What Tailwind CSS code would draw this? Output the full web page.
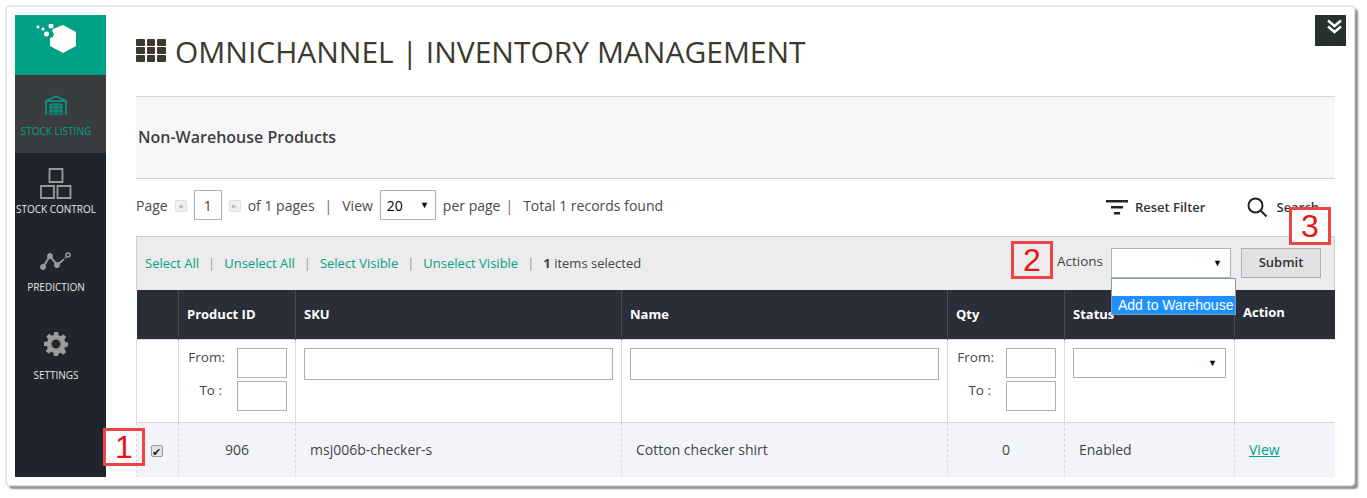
<!DOCTYPE html>
<html lang="en">
  <head>
    <meta charset="UTF-8" />
    <title>Inventory Management</title>
    <script src="https://cdn.jsdelivr.net/npm/@tailwindcss/browser@4"></script>
  </head>
  <body class="bg-white font-['Open_Sans',sans-serif] text-[#3d3d3d] w-[1367px] h-[498px] overflow-hidden">
    <!-- Window frame -->
    <div class="relative ml-[6px] mt-[6px] w-[1349px] h-[480px] bg-white rounded-[4px] border border-[#e0e0e0] shadow-[0_0_3px_#cfcfcf,3px_3px_2px_#8a8a8a] p-2 flex">
      <!-- Sidebar -->
      <div class="w-[91px] h-[462px] shrink-0 bg-[#20242c] flex flex-col text-[10px] text-[#e6e6e6] pr-[9px] relative">
        <div class="absolute left-0 top-0 w-[91px] h-[60px] bg-[#00a187]"></div>
        <div class="absolute left-0 top-[60px] w-[91px] h-[78px] bg-[#3a3d40]"></div>
        <div class="relative h-[60px] flex justify-center pt-[9px]">
          <svg width="40" height="29" viewBox="0 0 40 29" fill="#fff">
            <path d="M27 1l13 7v14l-13 7-13-7v-8l3-1 1-3-2-3 1-2z" />
            <circle cx="2" cy="3" r="1.500" />
            <circle cx="7" cy="5" r="1.500" />
            <circle cx="15" cy="2" r="2.500" />
            <circle cx="10.500" cy="10" r="2.500" />
          </svg>
        </div>
        <div class="relative h-[78px] flex flex-col items-center pt-[20px] text-[#00a187]">
          <svg width="22" height="20" viewBox="0 0 22 20" fill="none" stroke="#00a187" stroke-width="1.500">
            <path d="M1 20V6l10-5 10 5v14" />
            <path d="M1 6h20" />
            <path d="M5 9h12v11H5z" fill="#00a187" fill-opacity=".4" stroke-width="1" />
            <path d="M5 12h12M5 16h12M11 12v8" stroke-width="1" />
          </svg>
          <span class="mt-[9px] leading-[14px] whitespace-nowrap">STOCK LISTING</span>
        </div>
        <div class="relative flex flex-col items-center pt-[15px] h-[80px]">
          <svg width="32" height="31" viewBox="0 0 32 31" fill="none" stroke="#9a9a9a" stroke-width="1.800">
            <path d="M9.500 1h13v13h-13zM1 18h13v12H1zM17.500 18h13v12h-13z" />
          </svg>
          <span class="mt-[3px] leading-[14px] whitespace-nowrap">STOCK CONTROL</span>
        </div>
        <div class="relative flex flex-col items-center pt-[18px] h-[88px]">
          <svg width="32" height="20" viewBox="0 0 32 20" fill="none" stroke="#9a9a9a">
            <path d="M3 16L10 5l7 9 6-5" stroke-width="2" />
            <path d="M23 9l3-3" stroke-width="1.500" stroke-dasharray="1.500 1" />
            <circle cx="3" cy="16" r="2.500" fill="#9a9a9a" />
            <circle cx="10" cy="5" r="2.500" fill="#9a9a9a" />
            <circle cx="17" cy="14" r="2.500" fill="#9a9a9a" />
            <circle cx="28" cy="4" r="2" stroke-width="1.500" />
          </svg>
          <span class="mt-[9px] leading-[14px]">PREDICTION</span>
        </div>
        <div class="relative flex flex-col items-center pt-[11px]">
          <svg width="24" height="24" viewBox="0 0 24 24" fill="#9a9a9a">
            <path fill-rule="evenodd" d="M10 0h4l.6 3.300 2 .9L19.400 2.300l2.800 2.800-1.900 2.800.9 2 3.300.6v4l-3.300.6-.9 2 1.900 2.800-2.800 2.800-2.800-1.900-2 .9L14 24h-4l-.6-3.300-2-.9-2.800 1.900-2.800-2.800 1.900-2.800-.9-2L0 14v-4l3.300-.6.9-2L2.300 4.600l2.800-2.800 2.800 1.900 2-.9zM12 7.500a4.500 4.500 0 100 9 4.500 4.500 0 000-9z" />
          </svg>
          <span class="mt-[12px] leading-[14px]">SETTINGS</span>
        </div>
      </div>

      <!-- Main -->
      <div class="w-[1199px] ml-[30px] h-[462px] overflow-hidden shrink-0">
        <h1 class="h-[81px] flex items-center gap-[9px] text-[#3c3a30] text-[30px] leading-none whitespace-nowrap pb-[8px]">
          <span class="grid grid-cols-3 gap-x-[2px] gap-y-[1px] w-[30px] -mt-[2px]">
            <i class="h-[7px] bg-[#3c3a30] rounded-[1px]"></i><i class="h-[7px] bg-[#3c3a30] rounded-[1px]"></i><i class="h-[7px] bg-[#3c3a30] rounded-[1px]"></i>
            <i class="h-[7px] bg-[#3c3a30] rounded-[1px]"></i><i class="h-[7px] bg-[#3c3a30] rounded-[1px]"></i><i class="h-[7px] bg-[#3c3a30] rounded-[1px]"></i>
            <i class="h-[7px] bg-[#3c3a30] rounded-[1px]"></i><i class="h-[7px] bg-[#3c3a30] rounded-[1px]"></i><i class="h-[7px] bg-[#3c3a30] rounded-[1px]"></i>
          </span>
          OMNICHANNEL | INVENTORY MANAGEMENT
        </h1>

        <div class="h-[83px] bg-[#f7f7f7] border-y border-[#d0d3de] flex items-center pl-[2px] pb-[2px] text-[16px] font-semibold text-[#3f3f3f]">
          Non-Warehouse Products
        </div>

        <!-- Pager -->
        <div class="h-[57px] flex items-start pt-[11px] text-[14px] text-[#4a4a4a] whitespace-nowrap">
          <span class="mt-[5px]">Page</span>
          <span class="mt-[10px] ml-[7px] w-[12px] h-[12px] bg-[#f2f2f2] border border-[#ddd] rounded-[2px] flex items-center justify-center text-[6px] text-[#bbb]">◀</span>
          <span class="ml-[7px] w-[28px] h-[30px] border border-[#aeb0bc] flex items-center justify-center text-[#7a1a1a] text-[14px]">1</span>
          <span class="mt-[10px] ml-[7px] w-[12px] h-[12px] bg-[#f2f2f2] border border-[#ddd] rounded-[2px] flex items-center justify-center text-[6px] text-[#bbb]">▶</span>
          <span class="mt-[5px] ml-[7px]">of 1 pages</span>
          <span class="mt-[5px] ml-[10px] text-[#a05070]">|</span>
          <span class="mt-[5px] ml-[10px]">View</span>
          <span class="ml-[7px] w-[56px] h-[30px] border border-[#aeb0bc] flex items-center justify-between px-[6px] text-black">20<span class="text-[9px]">▼</span></span>
          <span class="mt-[5px] ml-[7px]">per page</span>
          <span class="mt-[5px] ml-[5px] text-[#a05070]">|</span>
          <span class="mt-[5px] ml-[10px]">Total 1 records found</span>
          <div class="ml-auto flex items-center mt-[7px] text-[13px] font-semibold text-[#333]">
            <svg width="22" height="15" viewBox="0 0 22 15" fill="#222"><path d="M0 0h22v2.500H0zM5 6h12v2.500H5zM8 12h6v2.500H8z" /></svg>
            <span class="ml-[7px]">Reset Filter</span>
            <svg class="ml-[42px]" width="21" height="21" viewBox="0 0 21 21" fill="none" stroke="#222" stroke-width="2"><circle cx="8.500" cy="8.500" r="7" /><path d="M13.500 13.500l6 6" /></svg>
            <span class="ml-[8px] mr-[16px]">Search</span>
          </div>
        </div>

        <!-- Mass actions -->
        <div class="h-[54px] bg-[#ececec] border border-[#cfcfcf] border-b-0 flex items-center pl-[8px] text-[13px] text-[#00a187] whitespace-nowrap">
          <span>Select All</span><span class="mx-[9px] text-[#999]">|</span>
          <span>Unselect All</span><span class="mx-[9px] text-[#999]">|</span>
          <span>Select Visible</span><span class="mx-[9px] text-[#999]">|</span>
          <span>Unselect Visible</span><span class="mx-[9px] text-[#999]">|</span>
          <span class="text-[#444]"><b class="font-bold">1</b> items selected</span>
          <div class="ml-auto flex items-center text-[#444] pb-[1px]">
            <span class="text-[13.500px] -mt-[3px]">Actions</span>
            <span class="ml-[8px] w-[120px] h-[30px] bg-white border border-[#aeb0bc] flex items-center justify-end pr-[8px] text-black text-[9px]">▼</span>
            <button class="ml-[10px] mr-[13px] w-[80px] h-[30px] bg-[#e2e2e2] border border-[#aeb0bc] text-[13px] font-semibold text-[#333]">Submit</button>
          </div>
        </div>

        <!-- Grid -->
        <table class="table-fixed w-[1199px] border-collapse text-[14px] text-[#444]">
          <colgroup>
            <col class="w-[42px]" /><col class="w-[117px]" /><col class="w-[326px]" /><col class="w-[326px]" /><col class="w-[117px]" /><col class="w-[170px]" /><col class="w-[101px]" />
          </colgroup>
          <thead>
            <tr class="h-[49px] bg-[#2a2e38] text-white text-[13px] text-left">
              <th class="border-r border-[#454a56]"></th>
              <th class="border-r border-[#454a56] pl-[8px] font-bold">Product ID</th>
              <th class="border-r border-[#454a56] pl-[8px] font-bold">SKU</th>
              <th class="border-r border-[#454a56] pl-[8px] font-bold">Name</th>
              <th class="border-r border-[#454a56] pl-[8px] font-bold">Qty</th>
              <th class="border-r border-[#454a56] pl-[8px] font-bold">Status</th>
              <th class="pl-[8px] pb-[4px] font-bold">Action</th>
            </tr>
          </thead>
          <tbody>
            <tr class="h-[83px] align-top">
              <td class="border border-[#d8d8de]"></td>
              <td class="border border-[#d8d8de] pt-[8px] text-[13.500px]">
                <div class="flex items-start justify-end pr-[8px] gap-[12px]"><span class="leading-[18px]">From:</span><span class="w-[50px] h-[30px] border border-[#aeb0bc]"></span></div>
                <div class="flex items-start justify-end pr-[8px] gap-[12px] mt-[3px]"><span class="pr-[3px] leading-[18px]">To :</span><span class="w-[50px] h-[30px] border border-[#aeb0bc]"></span></div>
              </td>
              <td class="border border-[#d8d8de] pt-[8px] pl-[8px]"><div class="w-[309px] h-[32px] border border-[#aeb0bc]"></div></td>
              <td class="border border-[#d8d8de] pt-[8px] pl-[8px]"><div class="w-[309px] h-[32px] border border-[#aeb0bc]"></div></td>
              <td class="border border-[#d8d8de] pt-[8px] text-[13.500px]">
                <div class="flex items-start justify-end pr-[8px] gap-[12px]"><span class="leading-[18px]">From:</span><span class="w-[50px] h-[30px] border border-[#aeb0bc]"></span></div>
                <div class="flex items-start justify-end pr-[8px] gap-[12px] mt-[3px]"><span class="pr-[3px] leading-[18px]">To :</span><span class="w-[50px] h-[30px] border border-[#aeb0bc]"></span></div>
              </td>
              <td class="border border-[#d8d8de] pt-[8px] pl-[8px]"><div class="w-[153px] h-[30px] border border-[#aeb0bc] flex items-center justify-end pr-[8px] text-[9px] text-black">▼</div></td>
              <td class="border border-[#d8d8de]"></td>
            </tr>
            <tr class="h-[56px] bg-[#f3f4fa]">
              <td class="border-l border-r border-dashed border-[#d8d8de] text-center">
                <span class="inline-flex w-[12px] h-[12px] bg-[#e4e4e4] border border-[#999] rounded-[2px] items-center justify-center text-[11px] leading-none text-[#222] -ml-[2px]">✔</span>
              </td>
              <td class="border-r border-dashed border-[#d8d8de] text-center pb-[2px]">906</td>
              <td class="border-r border-dashed border-[#d8d8de] pl-[14px] pb-[2px]">msj006b-checker-s</td>
              <td class="border-r border-dashed border-[#d8d8de] pl-[14px] pb-[2px]">Cotton checker shirt</td>
              <td class="border-r border-dashed border-[#d8d8de] text-center pb-[2px]">0</td>
              <td class="border-r border-dashed border-[#d8d8de] pl-[14px] pb-[2px]">Enabled</td>
              <td class="border-r border-[#d8d8de] pl-[14px] pb-[2px] text-[#00a187] underline">View</td>
            </tr>
          </tbody>
        </table>
      </div>

      <!-- Collapse button -->
      <div class="absolute right-[8px] top-[8px] w-[31px] h-[31px] bg-[#25302f] flex justify-end pr-[4px] pt-[4px]">
        <svg width="15" height="15" viewBox="0 0 15 15" fill="none" stroke="#fff" stroke-width="2.500"><path d="M1 1.500L7.500 7 14 1.500M1 7.500L7.500 13 14 7.500" /></svg>
      </div>

      <!-- Open action dropdown -->
      <div class="absolute left-[1104px] top-[271px] w-[125px] h-[37px] bg-white border border-[#7f9db9] flex flex-col justify-end font-['Liberation_Sans',sans-serif] text-[14px] text-white whitespace-nowrap">
        <div class="h-[18px] bg-[#1e90ff] pl-[6px] leading-[18px]">Add to Warehouse</div>
      </div>

      <!-- Step callouts -->
      <div class="absolute left-[96px] top-[421px] w-[42px] h-[38px] border-[3px] border-[#ee4444] flex items-center justify-center font-['Liberation_Sans',sans-serif] text-[32px] text-[#ee1111] leading-none">1</div>
      <div class="absolute left-[1004px] top-[234px] w-[42px] h-[38px] border-[3px] border-[#ee4444] flex items-center justify-center font-['Liberation_Sans',sans-serif] text-[32px] text-[#ee1111] leading-none">2</div>
      <div class="absolute left-[1282px] top-[200px] w-[42px] h-[38px] bg-white border-[3px] border-[#ee4444] flex items-center justify-center font-['Liberation_Sans',sans-serif] text-[32px] text-[#ee1111] leading-none">3</div>
    </div>
  </body>
</html>
